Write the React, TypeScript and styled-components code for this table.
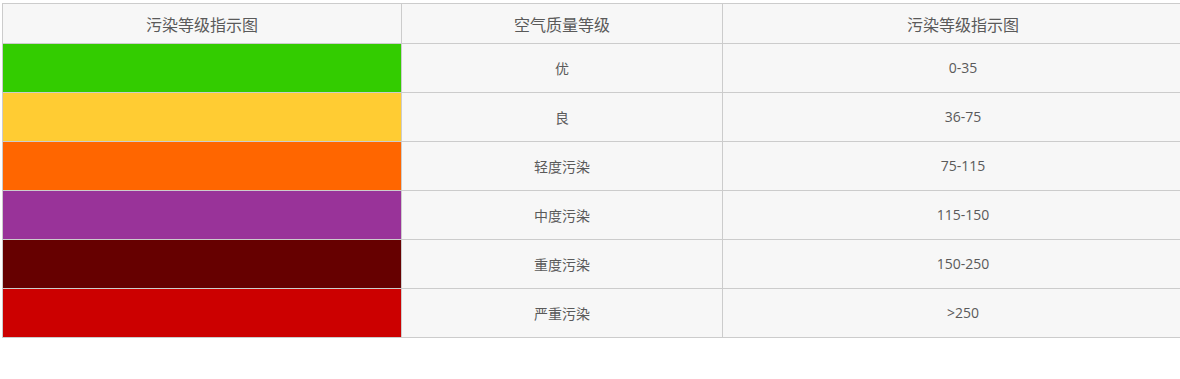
import React from "react";
import styled, { createGlobalStyle } from "styled-components";

const Global = createGlobalStyle`
  html, body { margin: 0; padding: 0; background: #fff; }
  body { font-family: "Open Sans", "Noto Sans CJK SC", sans-serif; overflow: hidden; }
`;

const Page = styled.div`
  padding: 3px 0 0 2px;
  width: 1178px;
  overflow: hidden;
`;

const Table = styled.table`
  border-collapse: collapse;
  table-layout: fixed;
  width: 1201px;
  background: #f7f7f7;
`;

const Th = styled.th`
  height: 39px;
  padding: 0;
  border: 1px solid #cccccc;
  font-weight: normal;
  font-size: 16px;
  line-height: 20px;
  color: #5a5a5a;
  text-align: center;
  vertical-align: middle;
  font-family: "Noto Sans CJK SC", sans-serif;
`;

const Td = styled.td<{ $cjk?: boolean }>`
  height: 48px;
  padding: 0;
  border: 1px solid #cccccc;
  font-size: 14px;
  line-height: 18px;
  color: #5a5a5a;
  text-align: center;
  vertical-align: middle;
  font-family: ${(p) => (p.$cjk ? `"Noto Sans CJK SC", sans-serif` : `"Open Sans", sans-serif`)};
`;

const Swatch = styled.td<{ $color: string }>`
  height: 48px;
  padding: 0;
  border: 1px solid #cccccc;
  background: ${(p) => p.$color};
`;

const rows = [
  { color: "#33cc00", level: "优", range: "0-35" },
  { color: "#ffcc33", level: "良", range: "36-75" },
  { color: "#ff6600", level: "轻度污染", range: "75-115" },
  { color: "#993399", level: "中度污染", range: "115-150" },
  { color: "#660000", level: "重度污染", range: "150-250" },
  { color: "#cc0000", level: "严重污染", range: ">250" },
];

export default function App() {
  return (
    <>
      <Global />
      <Page>
        <Table>
          <colgroup>
            <col style={{ width: 399 }} />
            <col style={{ width: 321 }} />
            <col style={{ width: 481 }} />
          </colgroup>
          <thead>
            <tr>
              <Th>污染等级指示图</Th>
              <Th>空气质量等级</Th>
              <Th>污染等级指示图</Th>
            </tr>
          </thead>
          <tbody>
            {rows.map((r) => (
              <tr key={r.level}>
                <Swatch $color={r.color} />
                <Td $cjk>{r.level}</Td>
                <Td>{r.range}</Td>
              </tr>
            ))}
          </tbody>
        </Table>
      </Page>
    </>
  );
}
